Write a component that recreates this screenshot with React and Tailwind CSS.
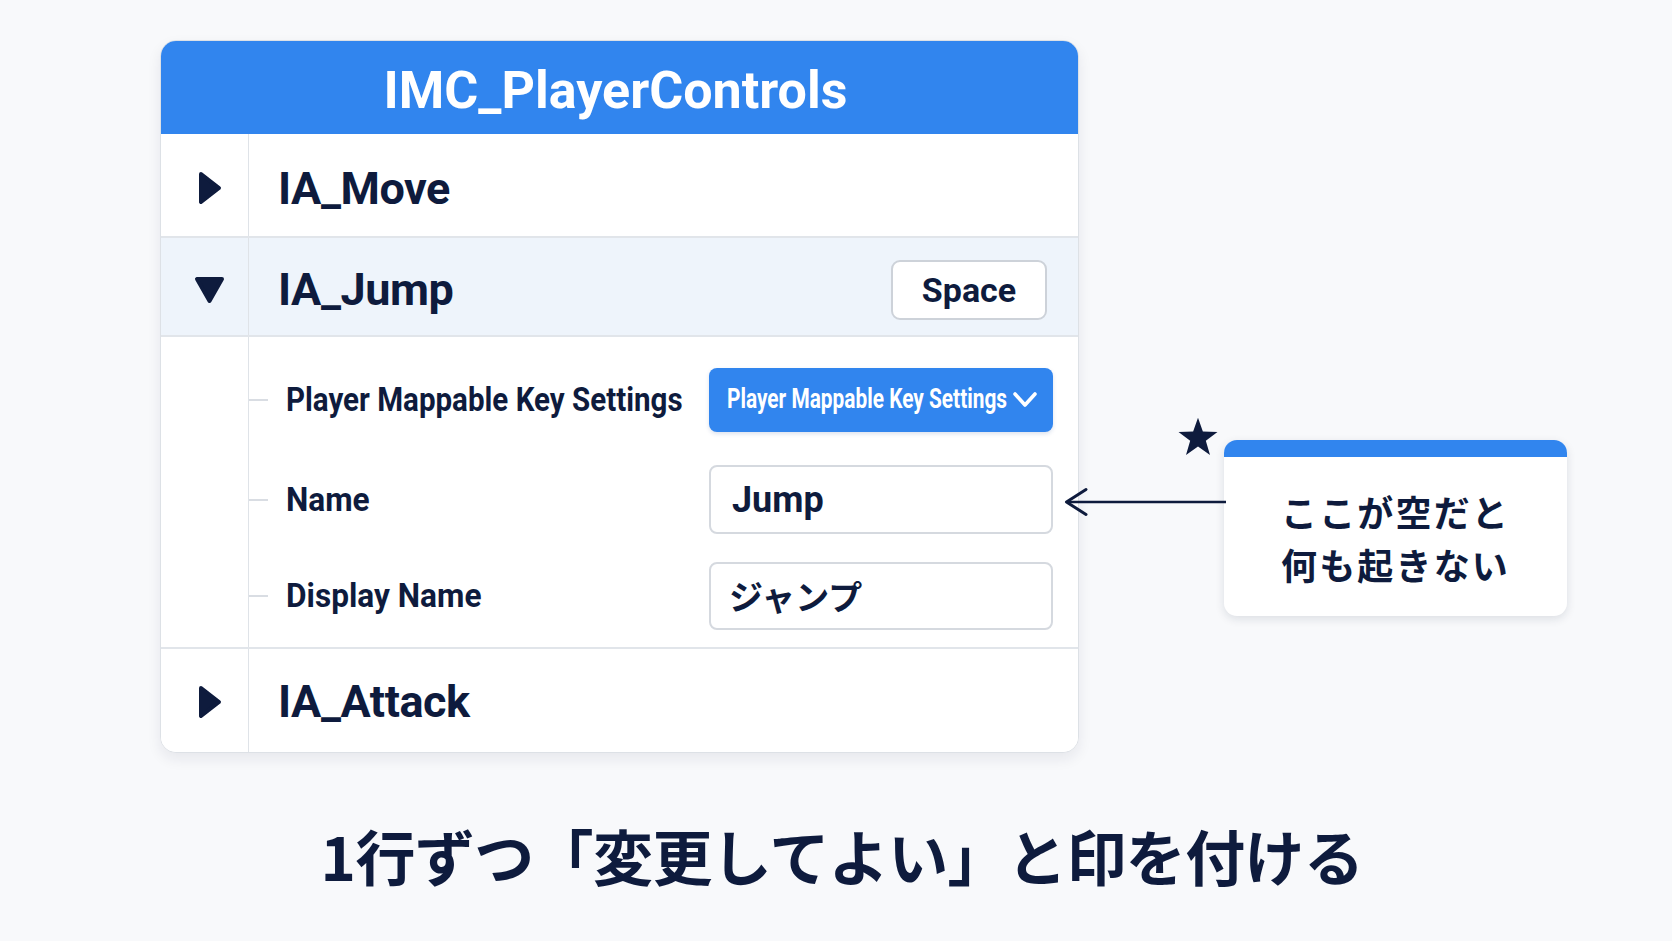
import React from "react";

const NAVY = "#0e1b3d";

function TriRight() {
  return (
    <svg width="24" height="34" viewBox="0 0 24 34">
      <polygon points="3,3 21,17 3,31" fill={NAVY} stroke={NAVY} strokeWidth="4" strokeLinejoin="round" />
    </svg>
  );
}

function TriDown() {
  return (
    <svg width="31" height="28" viewBox="0 0 31 28">
      <polygon points="3,3 28,3 15.5,25" fill={NAVY} stroke={NAVY} strokeWidth="4" strokeLinejoin="round" />
    </svg>
  );
}

function Row({ open, label, right, bg, h, pt, border = true }) {
  return (
    <div className={`flex ${h} ${bg} ${border ? "border-b-2 border-[#e1e5ea]" : ""}`}>
      <div className={`flex w-[88px] shrink-0 items-center justify-center border-r border-[#dfe3e8] pl-[10px] ${pt}`}>
        {open ? <TriDown /> : <TriRight />}
      </div>
      <div className={`flex flex-1 items-center pl-[29px] pr-[31px] ${pt}`}>
        <span className="text-[45px] font-bold leading-none tracking-[-0.01em]">{label}</span>
        {right}
      </div>
    </div>
  );
}

function Field({ label, labelSize, children, mt }) {
  return (
    <div className={`flex items-center ${mt}`}>
      <div className="h-[2px] w-[19px] shrink-0 bg-[#d9dde3]" />
      <div className="ml-[18px] w-[400px] shrink-0">
        <span className={`inline-block origin-left whitespace-nowrap ${labelSize} font-bold leading-none`}>{label}</span>
      </div>
      <div className="ml-auto shrink-0">{children}</div>
    </div>
  );
}

function Card() {
  return (
    <div className="w-[919px] shrink-0 overflow-hidden rounded-[16px] border border-[#dde1e6] bg-white shadow-[0_6px_14px_rgba(20,30,60,0.08)]">
      <div className="flex h-[93px] items-center justify-center bg-[#3185ee] pt-[6px] pr-[8px]">
        <span className="text-[52px] font-bold leading-none text-white">IMC_PlayerControls</span>
      </div>
      <Row label="IA_Move" h="h-[104px]" bg="bg-white" pt="pt-[6px]" />
      <Row
        open
        label="IA_Jump"
        h="h-[99px]"
        bg="bg-[#eef4fb]"
        pt="pt-[6px]"
        right={
          <div className="ml-auto flex h-[60px] w-[156px] items-center justify-center rounded-[9px] border-2 border-[#cdd2d9] bg-white">
            <span className="text-[34px] font-bold leading-none">Space</span>
          </div>
        }
      />
      <div className="flex h-[312px] border-b-2 border-[#e1e5ea]">
        <div className="w-[88px] shrink-0 border-r border-[#dfe3e8]" />
        <div className="flex flex-1 flex-col pr-[25px] pt-[31px]">
          <Field label="Player Mappable Key Settings" labelSize="text-[33px] scale-x-[0.895]">
            <div className="flex h-[64px] w-[344px] items-center justify-between rounded-[8px] bg-[#3185ee] pl-[18px] pr-[15px] shadow-[0_2px_4px_rgba(20,60,140,0.15)]">
              <div className="w-[277px]">
                <span className="inline-block origin-left scale-x-[0.745] whitespace-nowrap text-[28px] font-bold leading-none text-white">
                  Player Mappable Key Settings
                </span>
              </div>
              <svg width="26" height="18" viewBox="0 0 26 18">
                <polyline points="3,3 13,14 23,3" fill="none" stroke="white" strokeWidth="3.6" strokeLinecap="round" strokeLinejoin="round" />
              </svg>
            </div>
          </Field>
          <Field label="Name" labelSize="text-[34px] scale-x-[0.93]" mt="mt-[33px]">
            <div className="flex h-[69px] w-[344px] items-center rounded-[8px] border-2 border-[#d5d9df] bg-white pl-[21px]">
              <span className="text-[36px] font-bold leading-none">Jump</span>
            </div>
          </Field>
          <Field label="Display Name" labelSize="text-[34px] scale-x-[0.93]" mt="mt-[28px]">
            <div className="flex h-[68px] w-[344px] items-center rounded-[8px] border-2 border-[#d5d9df] bg-white pl-[18px]">
              <span className="font-['Noto_Sans_CJK_JP',sans-serif] text-[34px] font-bold leading-none">ジャンプ</span>
            </div>
          </Field>
        </div>
      </div>
      <Row label="IA_Attack" h="h-[103px]" bg="bg-white" pt="pt-[2px]" border={false} />
    </div>
  );
}

function Callout() {
  return (
    <div className="relative ml-[145px] mt-[400px] flex h-[176px] w-[343px] shrink-0 flex-col overflow-visible">
      <svg className="absolute left-[-47px] top-[-23px]" width="42" height="40" viewBox="0 0 24 23">
        <polygon
          points="12,0.5 14.8,8.4 23.2,8.6 16.5,13.7 18.9,21.8 12,17 5.1,21.8 7.5,13.7 0.8,8.6 9.2,8.4"
          fill={NAVY}
        />
      </svg>
      <svg className="absolute left-[-160px] top-[46px]" width="162" height="32" viewBox="0 0 162 32">
        <line x1="3" y1="16" x2="162" y2="16" stroke={NAVY} strokeWidth="2.6" />
        <polyline points="22,3.5 2.5,16 22,28.5" fill="none" stroke={NAVY} strokeWidth="3" strokeLinecap="round" strokeLinejoin="round" />
      </svg>
      <div className="flex h-full flex-col overflow-hidden rounded-[13px] bg-white shadow-[0_3px_10px_rgba(20,30,60,0.12)]">
        <div className="h-[17px] shrink-0 bg-[#3185ee]" />
        <div className="flex flex-1 items-center justify-center pt-[3px]">
          <p className="text-center font-['Noto_Sans_CJK_JP',sans-serif] text-[36px] font-bold leading-[53px] tracking-[0.06em]">
            ここが空だと
            <br />
            何も起きない
          </p>
        </div>
      </div>
    </div>
  );
}

export default function App() {
  return (
    <div className={`relative h-[941px] w-[1672px] overflow-hidden bg-[#f8f9fb] font-['Roboto','Noto_Sans_CJK_JP',sans-serif] text-[#0e1b3d]`}>
      <div className="flex items-start pl-[160px] pt-[40px]">
        <Card />
        <Callout />
      </div>
      <p className="mt-[66px] pl-[12px] text-center font-['Noto_Sans_CJK_JP',sans-serif] text-[60px] font-bold leading-[72px] tracking-[-0.01em]">
        1行ずつ「変更してよい」と印を付ける
      </p>
    </div>
  );
}
